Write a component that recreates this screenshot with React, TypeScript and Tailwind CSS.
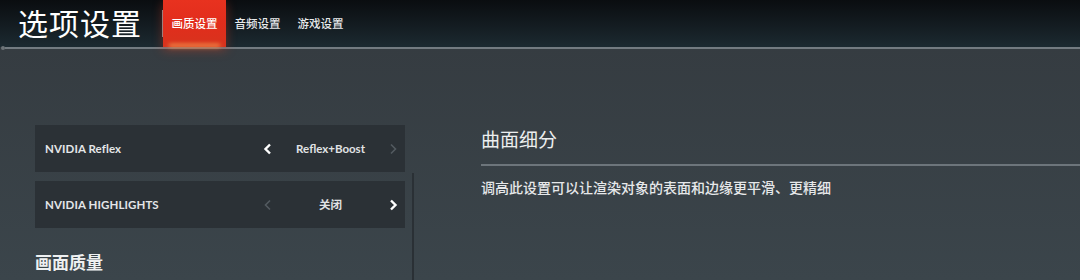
import React from 'react';

const font = { fontFamily: '"Noto Sans", "Noto Sans CJK SC", sans-serif' };
const rowFont = { fontFamily: 'Lato, "Noto Sans CJK SC", sans-serif' };

const Chevron = ({ dir, active }: { dir: 'left' | 'right'; active: boolean }) => (
  <svg
    width="10"
    height="12"
    viewBox="0 0 10 12"
    className={active ? 'text-white' : 'text-[#535a60]'}
  >
    <path
      d={dir === 'left' ? 'M7 1.5 L2.5 6 L7 10.5' : 'M3 1.5 L7.5 6 L3 10.5'}
      fill="none"
      stroke="currentColor"
      strokeWidth={active ? 2.4 : 1.6}
      strokeLinejoin="miter"
    />
  </svg>
);

interface OptionRowProps {
  label: string;
  value: string;
  canPrev: boolean;
  canNext: boolean;
}

const OptionRow: React.FC<OptionRowProps> = ({ label, value, canPrev, canNext }) => (
  <div className="flex items-center h-[47px] bg-[#2b3136] pl-[10px] pr-[7px]" style={rowFont}>
    <span className="flex-1 text-[11.5px] font-bold text-[#e4e6e8] tracking-[0.1px]">{label}</span>
    <div className="flex items-center w-[135px]">
      <Chevron dir="left" active={canPrev} />
      <span className="flex-1 text-center text-[11.5px] font-bold text-[#e1e3e5]">{value}</span>
      <Chevron dir="right" active={canNext} />
    </div>
  </div>
);

const tabs = ['画质设置', '音频设置', '游戏设置'];

export default function App() {
  return (
    <div
      className="w-[1080px] h-[280px] overflow-hidden bg-gradient-to-b from-[#343a3f] to-[#3b454b]"
      style={font}
    >
      {/* header */}
      <div className="flex h-[47px] bg-gradient-to-b from-[#0a0d10] to-[#1c2a31]">
        <h1 className="pl-[18px] pr-[20px] flex items-center text-[30px] leading-none text-white font-normal tracking-[1px]">
          选项设置
        </h1>
        <div className="flex items-stretch">
          <div className="w-px my-[10px] bg-[#8a8f93]" />
          {tabs.map((t, i) => (
            <div
              key={t}
              className={`relative flex items-center justify-center w-[63px] text-[11.5px] font-medium ${
                i === 0
                  ? 'bg-gradient-to-b from-[#e8321f] via-[#e22d1c] to-[#d7331d] text-white shadow-[0_3px_10px_rgba(230,60,30,0.4)]'
                  : 'text-[#e8eaec]'
              }`}
            >
              {t}
              {i === 0 && (
                <div className="absolute bottom-0 left-[6px] right-[6px] h-[3px] bg-[#f59a50] blur-[2px]" />
              )}
            </div>
          ))}
        </div>
      </div>
      <div className="flex items-center h-[2px]">
        <div className="w-[4px] h-[4px] rounded-full bg-[#6c7378] ml-[1px]" />
        <div className="flex-1 h-[2px] bg-[#737b81]" />
      </div>

      {/* body */}
      <div className="flex">
        <div className="w-[370px] ml-[35px] pt-[76px] flex flex-col gap-[9px]">
          <OptionRow label="NVIDIA Reflex" value="Reflex+Boost" canPrev canNext={false} />
          <OptionRow label="NVIDIA HIGHLIGHTS" value="关闭" canPrev={false} canNext />
          <h2 className="mt-[17px] text-[17px] font-bold text-[#eef0f1] leading-none">画面质量</h2>
        </div>
        <div className="w-[2px] ml-[7px] mt-[124px] h-[120px] bg-[#2a3035]" />
        <div className="flex-1 ml-[67px] pt-[82px]">
          <div className="text-[19px] text-[#eceeef] leading-none pb-[14px]">曲面细分</div>
          <div className="h-[2px] bg-[#6d757b]" />
          <p className="mt-[15px] text-[14px] font-medium text-[#e6e8ea] leading-none">
            调高此设置可以让渲染对象的表面和边缘更平滑、更精细
          </p>
        </div>
      </div>
    </div>
  );
}
